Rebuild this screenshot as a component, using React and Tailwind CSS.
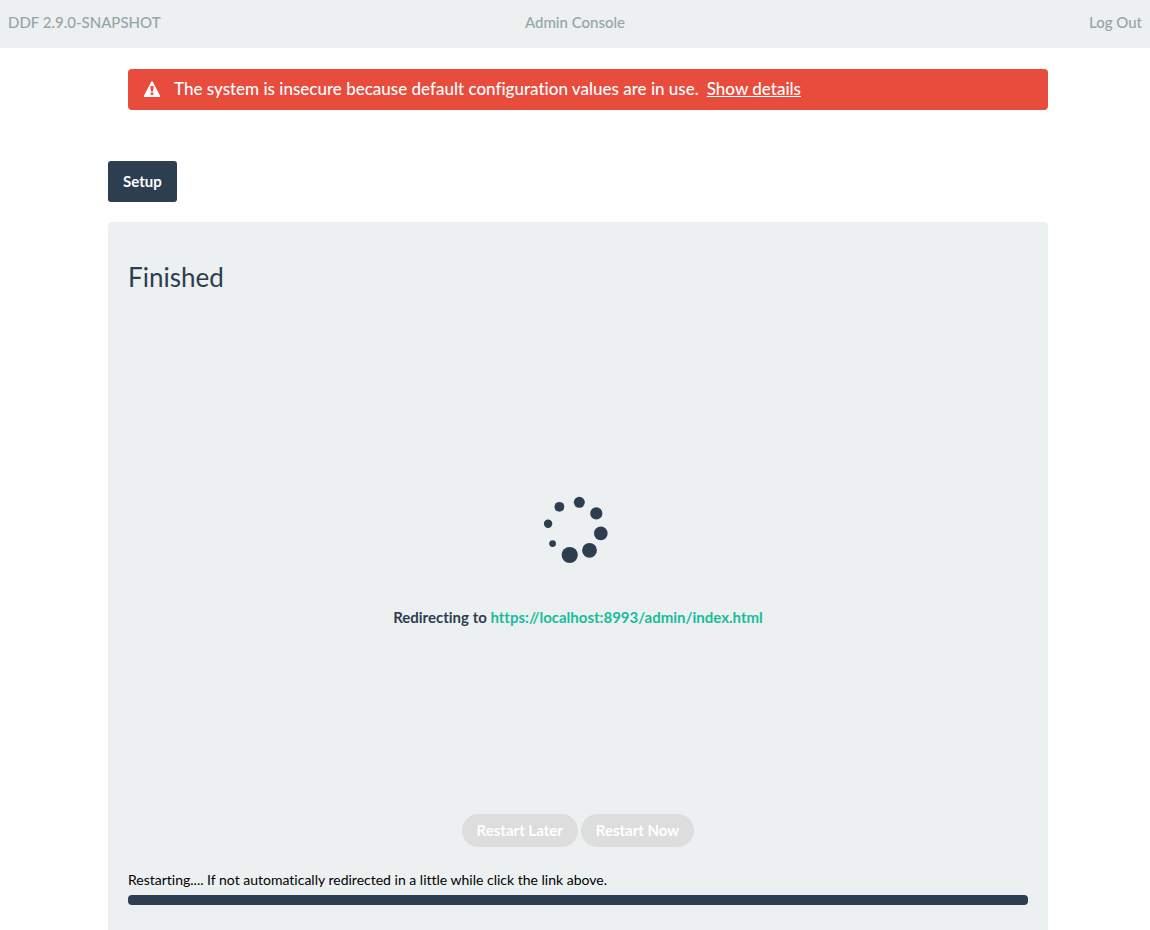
import React from "react";

const dots = [
  [579.3, 502.3, 5.5], [596.3, 513.4, 6.1], [600.8, 533.4, 6.8], [589.5, 550.3, 7.4],
  [569.7, 555, 8.1], [552.6, 543.6, 3.4], [548.1, 523.8, 4.2], [559.4, 506.8, 4.9],
];

export default function App() {
  return (
    <div className="min-h-screen bg-white font-['Lato',sans-serif] text-[15px] leading-5 text-[#2c3e50] [font-variant-ligatures:none]">
      <header className="grid h-12 grid-cols-3 items-center bg-[#ecf0f1] px-2 pb-1 font-medium text-[#95a5a6]">
        <span>DDF 2.9.0-SNAPSHOT</span>
        <span className="text-center">Admin Console</span>
        <a href="#logout" className="text-right">Log Out</a>
      </header>
      <div className="pl-[6px]">
        <main className="mx-auto w-full max-w-[940px] pt-[21px]">
          <div role="alert" className="ml-5 flex h-[41px] items-center rounded bg-[#e74c3c] px-4 pb-[2px] text-[17px] font-medium text-white">
            <svg className="h-4 w-4" viewBox="0 0 16 16" fill="currentColor" aria-hidden="true">
              <path fillRule="evenodd" d="M7.4 0.5 Q8 -0.5 8.6 0.5 L16 14.5 Q16.3 16 15 16 H1 Q-0.3 16 0 14.5 Z M6.5 5 V7.5 L7 10.5 H9 L9.5 7.5 V5 Z M6.7 11.5 V14 H9.3 V11.5 Z" />
            </svg>
            <span className="ml-[14px]">The system is insecure because default configuration values are in use.</span>
            <a href="#details" className="ml-2 underline">Show details</a>
          </div>
          <button className="mt-[51px] block h-[41px] rounded-[3px] bg-[#2c3e50] px-[15px] pb-[2px] font-bold text-white">Setup</button>
          <section className="mt-5 flex min-h-[708px] flex-col rounded-t bg-[#ecf0f1] px-5 pt-[39px]">
            <h1 className="text-[26px] leading-8">Finished</h1>
            <svg className="mx-auto mt-[196px] h-[80px] w-[80px]" viewBox="538 489 80 80" fill="#2c3e50" aria-hidden="true">
              {dots.map(([x, y, r]) => <circle key={x} cx={x} cy={y} r={r} />)}
            </svg>
            <p className="mt-[38px] text-center font-bold">
              Redirecting to <a href="https://localhost:8993/admin/index.html" className="text-[#18bc9c]">https://localhost:8993/admin/index.html</a>
            </p>
            <div className="mt-[187px] flex justify-center gap-[3px] font-bold text-white">
              <button disabled className="h-[33px] rounded-full bg-[#dddddd] px-[15px] pb-[2px]">Restart Later</button>
              <button disabled className="h-[33px] rounded-full bg-[#dddddd] px-[15px] pb-[2px]">Restart Now</button>
            </div>
            <span id="restart-status" className="mt-[23px] text-[14px] text-black">Restarting.... If not automatically redirected in a little while click the link above.</span>
            <div role="progressbar" aria-labelledby="restart-status" className="mt-[5px] h-[10px] rounded bg-[#2c3e50]" />
          </section>
        </main>
      </div>
    </div>
  );
}
